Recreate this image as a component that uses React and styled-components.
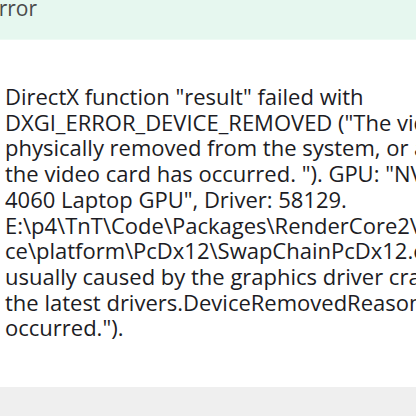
import React from 'react'
import styled, { createGlobalStyle } from 'styled-components'

const GlobalStyle = createGlobalStyle`
  html, body, #root {
    height: 100%;
    margin: 0;
    padding: 0;
  }
  body {
    overflow: hidden;
    background: #fff;
  }
`

const Dialog = styled.div`
  display: flex;
  flex-direction: column;
  width: 416px;
  height: 416px;
  overflow: hidden;
  font-family: 'Open Sans', 'Noto Sans', sans-serif;
`

const Header = styled.div`
  height: 39px;
  flex-shrink: 0;
  background-color: #e6f7ef;
  border-bottom: 1px solid #eefaf4;
  display: flex;
  align-items: flex-start;
  overflow: hidden;
`

const Title = styled.h1`
  margin: -4px 0 0 -13px;
  font-size: 21px;
  font-weight: 400;
  line-height: 24px;
  color: #4a4a4a;
  white-space: nowrap;
`

const Body = styled.div`
  flex: 1;
  background: #fff;
  padding: 44px 0 0 5px;
  overflow: hidden;
`

const Line = styled.div`
  font-size: 22px;
  font-weight: 500;
  line-height: 25.7px;
  color: #1c1c24;
  white-space: nowrap;
`

const Footer = styled.div`
  height: 29px;
  flex-shrink: 0;
  background-color: #efefef;
`

const lines = [
  'DirectX function "result" failed with',
  'DXGI_ERROR_DEVICE_REMOVED ("The video card has been',
  'physically removed from the system, or a driver upgrade for',
  'the video card has occurred. "). GPU: "NVIDIA GeForce RTX',
  '4060 Laptop GPU", Driver: 58129.',
  'E:\\p4\\TnT\\Code\\Packages\\RenderCore2\\Platform\\Sour',
  'ce\\platform\\PcDx12\\SwapChainPcDx12.cpp:410 This is',
  'usually caused by the graphics driver crashing; try installing',
  'the latest drivers.DeviceRemovedReason: ("The video card',
  'occurred.").',
]

const App = () => {
  return (
    <>
      <GlobalStyle />
      <Dialog>
        <Header>
          <Title>Error</Title>
        </Header>
        <Body>
          {lines.map((text, i) => (
            <Line key={i}>{text}</Line>
          ))}
        </Body>
        <Footer />
      </Dialog>
    </>
  )
}

export default App
